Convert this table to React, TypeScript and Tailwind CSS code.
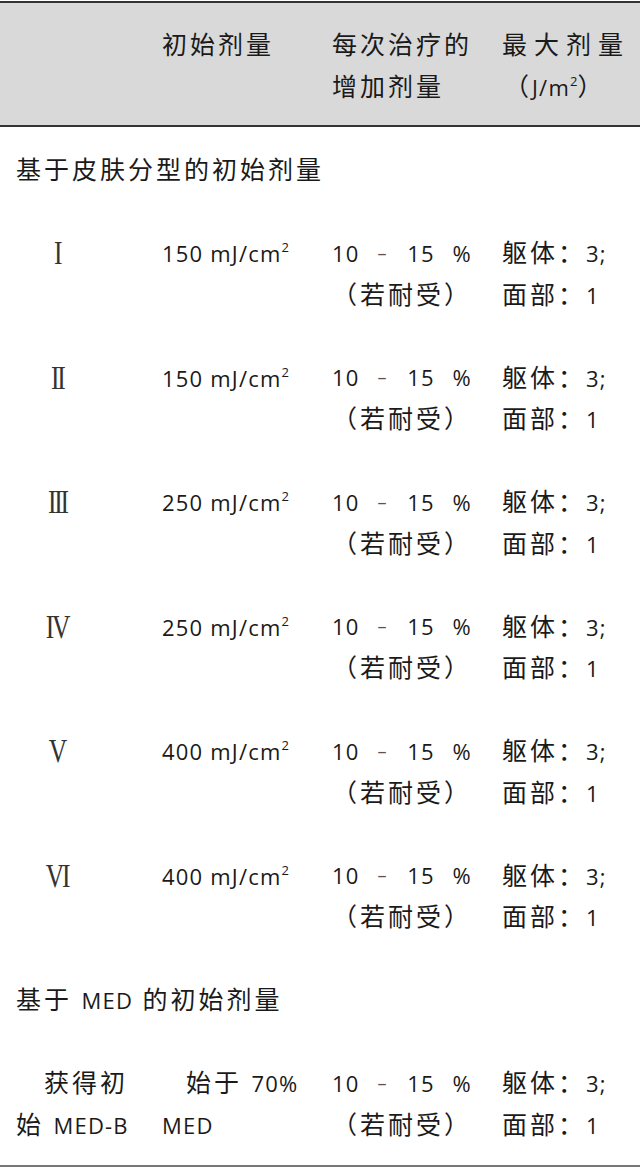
import type { ReactNode } from 'react'

const rows = [
  { type: 'I', dose: '150' },
  { type: 'II', dose: '150' },
  { type: 'III', dose: '250' },
  { type: 'IV', dose: '250' },
  { type: 'V', dose: '400' },
  { type: 'VI', dose: '400' },
]

// every text line sits on the same 41.5px grid
function Line({ children, className = '' }: { children?: ReactNode; className?: string }) {
  return <div className={`h-[41.5px] whitespace-nowrap ${className}`}>{children}</div>
}

// latin runs are set a bit smaller than the CJK text
function L({ children }: { children: ReactNode }) {
  return <span className="text-[22px] leading-none tracking-[1.2px]">{children}</span>
}

function Sup({ children }: { children: ReactNode }) {
  return (
    <span className="relative top-[-10px] text-[13px] leading-none tracking-normal">{children}</span>
  )
}

function Increase() {
  return (
    <div className="pl-[14px]">
      <Line className="flex w-[140px] items-center justify-between">
        <L>10</L>
        <span className="text-[18px] leading-none text-[#555]">–</span>
        <L>15</L>
        <L>%</L>
      </Line>
      <Line>（若耐受）</Line>
    </div>
  )
}

function MaxDose() {
  return (
    <div className="pl-[14px]">
      <Line>
        躯体：<L>3;</L>
      </Line>
      <Line>
        面部：<L>1</L>
      </Line>
    </div>
  )
}

export default function App() {
  return (
    <div className="min-h-[1169px] bg-white font-['Open_Sans','Noto_Sans_CJK_SC',sans-serif] text-[25px] leading-[41.5px] tracking-[3px] text-[#1a1a1a]">
      <div className="mt-px grid grid-cols-[148px_170px_170px_152px] border-t-2 border-b-2 border-t-[#333] border-b-[#333] bg-[#d9d9d9] pt-[21px] pb-[18px]">
        <div />
        <div className="pl-[14px]">
          <Line>初始剂量</Line>
        </div>
        <div className="pl-[14px]">
          <Line>每次治疗的</Line>
          <Line>增加剂量</Line>
        </div>
        <div className="pl-[14px]">
          <Line className="tracking-[7px]">最大剂量</Line>
          <Line className="pl-[2px]">
            （<L>J/m</L>
            <Sup>2</Sup>）
          </Line>
        </div>
      </div>

      <div className="pt-[22px]">
        <Line className="pl-[16px]">基于皮肤分型的初始剂量</Line>
        <Line />

        {rows.map((row) => (
          <div key={row.type} className="mb-[41.5px] grid grid-cols-[148px_170px_170px_152px]">
            <div className="flex h-[41.5px] w-[114px] justify-center">
              <span className="inline-block origin-center scale-x-75 font-['Liberation_Serif',serif] text-[34px] leading-[41.5px] tracking-[-3px] text-[#333]">
                {row.type}
              </span>
            </div>
            <div className="pl-[14px]">
              <Line>
                <L>{row.dose} mJ/cm</L>
                <Sup>2</Sup>
              </Line>
            </div>
            <Increase />
            <MaxDose />
          </div>
        ))}

        <Line className="pl-[16px]">
          基于 <L>MED</L> 的初始剂量
        </Line>
        <Line />

        <div className="grid grid-cols-[148px_170px_170px_152px] border-b-2 border-[#777] pb-[20px]">
          <div className="pl-[16px]">
            <Line className="pl-[28px]">获得初</Line>
            <Line>
              始 <L>MED-B</L>
            </Line>
          </div>
          <div className="pl-[14px]">
            <Line className="pl-[24px]">
              始于 <L>70%</L>
            </Line>
            <Line>
              <L>MED</L>
            </Line>
          </div>
          <Increase />
          <MaxDose />
        </div>
      </div>
    </div>
  )
}
